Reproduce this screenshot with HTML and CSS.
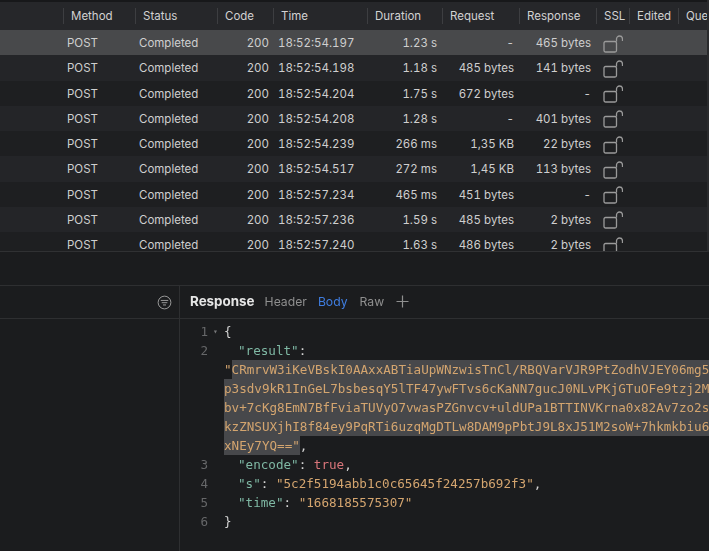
FILE: index.html
```html
<!DOCTYPE html>
<html lang="en">
<head>
    <meta charset="UTF-8">
    <title>Proxy traffic</title>
    <link rel="stylesheet" href="styles.css">
</head>
<body>
    <section class="traffic">
        <div class="grid head">
            <span></span>
            <span class="th">Method</span>
            <span class="th">Status</span>
            <span class="th">Code</span>
            <span class="th">Time</span>
            <span class="th">Duration</span>
            <span class="th">Request</span>
            <span class="th">Response</span>
            <span class="th">SSL</span>
            <span class="th">Edited</span>
            <span class="th">Que</span>
        </div>
        <div class="grid row selected">
            <span></span><span class="td">POST</span><span class="td">Completed</span><span class="td num">200</span><span class="td time">18:52:54.197</span><span class="td num wide">1.23 s</span><span class="td num wide">-</span><span class="td num wide">465 bytes</span>
            <svg class="lock" viewBox="0 0 20 20"><rect x="1" y="7.5" width="12.5" height="10.5" rx="1.5"/><path d="M13.5 7.5V5a3 3 0 0 1 6 0v2"/></svg>
        </div>
        <div class="grid row">
            <span></span><span class="td">POST</span><span class="td">Completed</span><span class="td num">200</span><span class="td time">18:52:54.198</span><span class="td num wide">1.18 s</span><span class="td num wide">485 bytes</span><span class="td num wide">141 bytes</span>
            <svg class="lock" viewBox="0 0 20 20"><rect x="1" y="7.5" width="12.5" height="10.5" rx="1.5"/><path d="M13.5 7.5V5a3 3 0 0 1 6 0v2"/></svg>
        </div>
        <div class="grid row">
            <span></span><span class="td">POST</span><span class="td">Completed</span><span class="td num">200</span><span class="td time">18:52:54.204</span><span class="td num wide">1.75 s</span><span class="td num wide">672 bytes</span><span class="td num wide">-</span>
            <svg class="lock" viewBox="0 0 20 20"><rect x="1" y="7.5" width="12.5" height="10.5" rx="1.5"/><path d="M13.5 7.5V5a3 3 0 0 1 6 0v2"/></svg>
        </div>
        <div class="grid row">
            <span></span><span class="td">POST</span><span class="td">Completed</span><span class="td num">200</span><span class="td time">18:52:54.208</span><span class="td num wide">1.28 s</span><span class="td num wide">-</span><span class="td num wide">401 bytes</span>
            <svg class="lock" viewBox="0 0 20 20"><rect x="1" y="7.5" width="12.5" height="10.5" rx="1.5"/><path d="M13.5 7.5V5a3 3 0 0 1 6 0v2"/></svg>
        </div>
        <div class="grid row">
            <span></span><span class="td">POST</span><span class="td">Completed</span><span class="td num">200</span><span class="td time">18:52:54.239</span><span class="td num wide">266 ms</span><span class="td num wide">1,35 KB</span><span class="td num wide">22 bytes</span>
            <svg class="lock" viewBox="0 0 20 20"><rect x="1" y="7.5" width="12.5" height="10.5" rx="1.5"/><path d="M13.5 7.5V5a3 3 0 0 1 6 0v2"/></svg>
        </div>
        <div class="grid row">
            <span></span><span class="td">POST</span><span class="td">Completed</span><span class="td num">200</span><span class="td time">18:52:54.517</span><span class="td num wide">272 ms</span><span class="td num wide">1,45 KB</span><span class="td num wide">113 bytes</span>
            <svg class="lock" viewBox="0 0 20 20"><rect x="1" y="7.5" width="12.5" height="10.5" rx="1.5"/><path d="M13.5 7.5V5a3 3 0 0 1 6 0v2"/></svg>
        </div>
        <div class="grid row">
            <span></span><span class="td">POST</span><span class="td">Completed</span><span class="td num">200</span><span class="td time">18:52:57.234</span><span class="td num wide">465 ms</span><span class="td num wide">451 bytes</span><span class="td num wide">-</span>
            <svg class="lock" viewBox="0 0 20 20"><rect x="1" y="7.5" width="12.5" height="10.5" rx="1.5"/><path d="M13.5 7.5V5a3 3 0 0 1 6 0v2"/></svg>
        </div>
        <div class="grid row">
            <span></span><span class="td">POST</span><span class="td">Completed</span><span class="td num">200</span><span class="td time">18:52:57.236</span><span class="td num wide">1.59 s</span><span class="td num wide">485 bytes</span><span class="td num wide">2 bytes</span>
            <svg class="lock" viewBox="0 0 20 20"><rect x="1" y="7.5" width="12.5" height="10.5" rx="1.5"/><path d="M13.5 7.5V5a3 3 0 0 1 6 0v2"/></svg>
        </div>
        <div class="grid row">
            <span></span><span class="td">POST</span><span class="td">Completed</span><span class="td num">200</span><span class="td time">18:52:57.240</span><span class="td num wide">1.63 s</span><span class="td num wide">486 bytes</span><span class="td num wide">2 bytes</span>
            <svg class="lock" viewBox="0 0 20 20"><rect x="1" y="7.5" width="12.5" height="10.5" rx="1.5"/><path d="M13.5 7.5V5a3 3 0 0 1 6 0v2"/></svg>
        </div>
    </section>

    <section class="detail">
        <aside class="side">
            <div class="side-top">
                <svg class="filter" viewBox="0 0 16 16"><circle cx="8" cy="8" r="6.8"/><path d="M4 5.8h8M5 8.2h6M6.4 10.6h3.2"/></svg>
            </div>
        </aside>
        <div class="pane">
            <div class="tabs">
                <span class="tab-title">Response</span>
                <span class="tab">Header</span>
                <span class="tab active">Body</span>
                <span class="tab">Raw</span>
                <svg class="plus" viewBox="0 0 13 13"><path d="M6.5 0.5v12M0.5 6.5h12"/></svg>
            </div>
            <div class="code">
                <div class="line"><span class="ln">1</span><span class="fold">▾</span><span class="p">{</span></div>
                <div class="line"><span class="ln">2</span><span class="fold"></span><span class="p in"><span class="key">"result"</span>:</span></div>
                <div class="line"><span class="ln"></span><span class="fold"></span><span class="str">"<span class="sel">CRmrvW3iKeVBskI0AAxxABTiaUpWNzwisTnCl/RBQVarVJR9PtZodhVJEY06mg5</span></span></div>
                <div class="line"><span class="ln"></span><span class="fold"></span><span class="str sel">p3sdv9kR1InGeL7bsbesqY5lTF47ywFTvs6cKaNN7gucJ0NLvPKjGTuOFe9tzj2M</span></div>
                <div class="line"><span class="ln"></span><span class="fold"></span><span class="str sel">bv+7cKg8EmN7BfFviaTUVyO7vwasPZGnvcv+uldUPa1BTTINVKrna0x82Av7zo2s</span></div>
                <div class="line"><span class="ln"></span><span class="fold"></span><span class="str sel">kzZNSUXjhI8f84ey9PqRTi6uzqMgDTLw8DAM9pPbtJ9L8xJ51M2soW+7hkmkbiu6</span></div>
                <div class="line"><span class="ln"></span><span class="fold"></span><span class="str"><span class="sel">xNEy7YQ=="</span></span><span class="p">,</span></div>
                <div class="line"><span class="ln">3</span><span class="fold"></span><span class="p in"><span class="key">"encode"</span>: <span class="bool">true</span>,</span></div>
                <div class="line"><span class="ln">4</span><span class="fold"></span><span class="p in"><span class="key">"s"</span>: <span class="str">"5c2f5194abb1c0c65645f24257b692f3"</span>,</span></div>
                <div class="line"><span class="ln">5</span><span class="fold"></span><span class="p in"><span class="key">"time"</span>: <span class="str">"1668185575307"</span></span></div>
                <div class="line"><span class="ln">6</span><span class="fold"></span><span class="p">}</span></div>
            </div>
        </div>
    </section>
</body>
</html>
```
FILE: styles.css
```css
* {
    box-sizing: border-box;
}
html, body {
    height: 100%;
}
body {
    margin: 0;
    width: 709px;
    height: 551px;
    overflow: hidden;
    background-color: #1b1c1e;
    font-family: Inter, "Liberation Sans", sans-serif;
    font-size: 11.5px;
    color: #cfcfcf;
    display: flex;
    flex-direction: column;
    filter: blur(0.3px); /* the capture is soft */
}
.traffic {
    height: 252px;
    overflow: hidden;
    border-bottom: 1px solid #303133;
    border-right: 2px solid #2a2b2d;
    flex: none;
}
.grid {
    display: grid;
    grid-template-columns: 63px 72px 82px 56px 94px 75px 77px 77px 33px 49px 31px;
    align-items: center;
}
.head {
    height: 30px;
    border-top: 2px solid #17181a;
    background-color: #26272a;
    white-space: nowrap;
    overflow: hidden;
}
.th {
    border-left: 1px solid #3d3e41;
    padding-left: 7px;
    height: 16px;
    line-height: 16px;
    color: #d2d2d2;
    overflow: hidden;
}
.row {
    height: 25.25px;
    background-color: #1e1f21;
    font-variant-numeric: tabular-nums;
}
.row:nth-child(odd) {
    background-color: #242528;
}
.row.selected {
    background-color: #48494b;
}
.td {
    padding-top: 1px;
    padding-left: 4px;
    white-space: nowrap;
}
.num {
    text-align: right;
    padding-left: 0;
    padding-right: 4px;
}
.num.wide {
    padding-right: 5px;
}
.time {
    padding-left: 5px;
}
.lock {
    width: 20px;
    height: 20px;
    margin: 2px 0 0 7px;
    fill: none;
    stroke: #9a9a9a;
    stroke-width: 1.3;
}

.detail {
    margin-top: 33px;
    flex: 1;
    display: flex;
    border-top: 1px solid #2e2f31;
}
.side {
    width: 180px;
    flex: none;
    border-right: 1px solid #2e2f31;
}
.side-top {
    height: 33px;
    border-bottom: 1px solid #2e2f31;
    display: flex;
    align-items: center;
    justify-content: flex-end;
    padding-right: 7px;
}
.filter {
    width: 15px;
    height: 15px;
    fill: none;
    stroke: #a0a0a0;
    stroke-width: 1;
}
.pane {
    flex: 1;
    min-width: 0;
}
.tabs {
    height: 33px;
    border-bottom: 1px solid #2e2f31;
    display: flex;
    align-items: center;
    padding: 0 0 2px 10px;
    gap: 10px;
}
.tab-title {
    font-size: 13.4px;
    font-weight: 700;
    color: #e6e6e6;
}
.tab {
    font-size: 12.2px;
    color: #8f8f8f;
}
.tab.active {
    color: #3f7de0;
    margin-left: 1px;
    margin-right: 2px;
}
.plus {
    width: 13px;
    height: 13px;
    margin-left: 2px;
    fill: none;
    stroke: #8f8f8f;
    stroke-width: 1.2;
}
.code {
    padding-top: 3px;
    font-family: "DejaVu Sans Mono", monospace;
    font-size: 12.6px;
    line-height: 19px;
}
.line {
    display: flex;
    height: 19px;
    overflow: hidden;
    white-space: pre;
}
.ln {
    width: 28px;
    flex: none;
    text-align: right;
    color: #666769;
}
.fold {
    width: 16px;
    flex: none;
    font-size: 8px;
    color: #77787a;
    padding-left: 5px;
}
.p {
    color: #d4d4d4;
}
.in {
    padding-left: 14px;
}
.key {
    color: #7fb8a4;
}
.str {
    color: #d4a56f;
}
.bool {
    color: #d9757a;
}
.sel {
    display: inline-block;
    background-color: #47484b;
}
```
